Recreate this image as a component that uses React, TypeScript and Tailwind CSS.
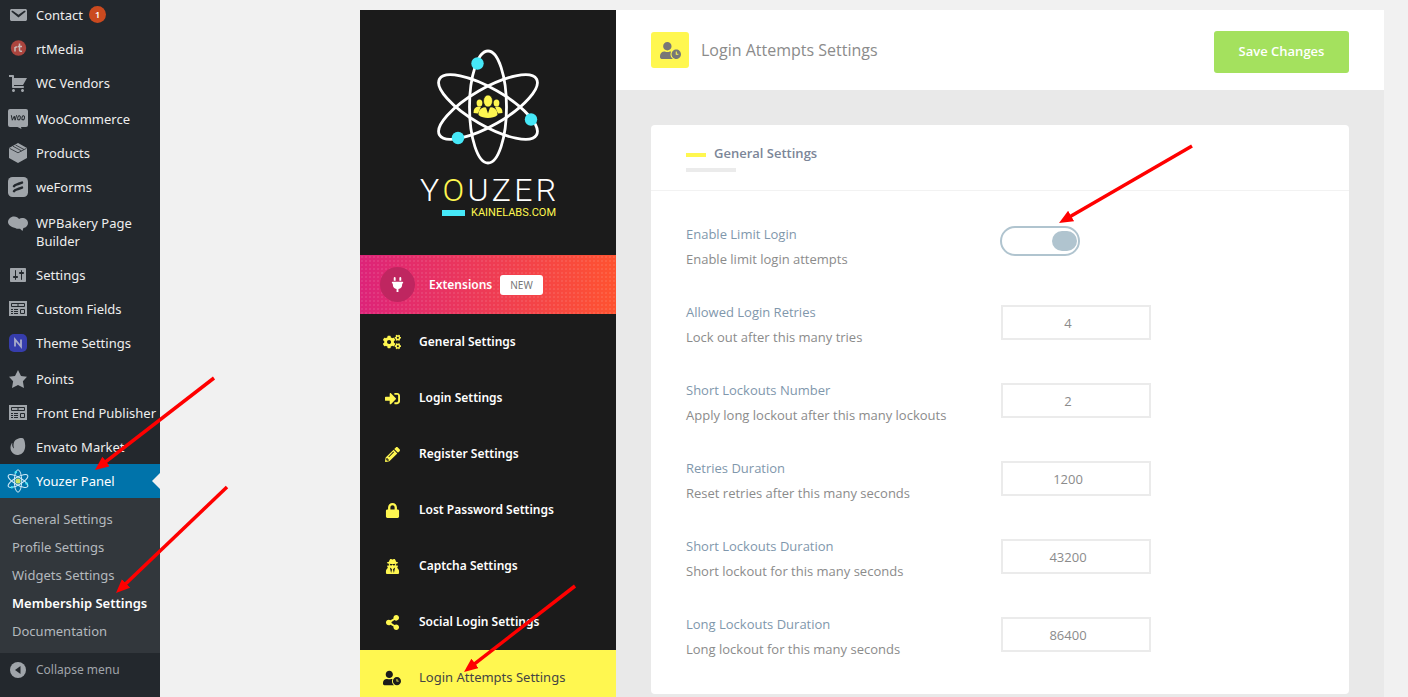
import type { ReactNode } from 'react';
import {
  FaCogs,
  FaLock,
  FaPencilAlt,
  FaPlug,
  FaShareAlt,
  FaSignInAlt,
  FaUserClock,
  FaUserSecret,
} from 'react-icons/fa';
import clsx from 'clsx';

const AtomRings = () => (
  <g fill="none">
    <ellipse cx="60" cy="60" rx="18.5" ry="56" />
    <ellipse cx="60" cy="60" rx="18.5" ry="56" transform="rotate(60 60 60)" />
    <ellipse cx="60" cy="60" rx="18.5" ry="56" transform="rotate(-60 60 60)" />
  </g>
);

const Svg = ({ children }: { children: ReactNode }) => (
  <svg viewBox="0 0 20 20" fill="#a0a5aa" className="size-5">
    {children}
  </svg>
);

const ListIcon = () => (
  <Svg>
    <path d="M1 2h18v15H1z" />
    <path
      d="M3.500 4.500h13v3h-13zM10 4.500v3M12.500 10.500h4v4h-4z"
      fill="none"
      stroke="#23282d"
    />
    <path
      d="M3 10h2v1H3zM6 10h4v1H6zM3 12h2v1H3zM6 12h4v1H6zM3 14h2v1H3zM6 14h4v1H6z"
      fill="#23282d"
    />
  </Svg>
);

type AdminItem = {
  label: string;
  icon: ReactNode;
  count?: number;
  tall?: boolean;
  active?: boolean;
};

const adminItems: AdminItem[] = [
  {
    label: 'Contact',
    count: 1,
    icon: (
      <Svg>
        <path d="M3.87 4h13.25C18.37 4 19 4.59 19 5.79v8.42c0 1.19-.63 1.79-1.88 1.79H3.87c-1.25 0-1.88-.6-1.88-1.79V5.79c0-1.2.63-1.79 1.88-1.79zm6.62 8.6 6.74-5.53c.24-.2.43-.66.13-1.07-.29-.41-.82-.42-1.17-.17l-5.7 3.86L4.8 5.83c-.35-.25-.88-.24-1.17.17-.3.41-.11.87.13 1.07z" />
      </Svg>
    ),
  },
  {
    label: 'rtMedia',
    icon: (
      <Svg>
        <circle cx="10.5" cy="9" r="7.7" fill="#ab453e" />
        <path
          d="M7 12.5V8M7 9.5c0-1.200 1-1.800 2.500-1.500M11.500 4.500v6.500c0 1 .8 1.500 2.500 1.200M10 7.500h4"
          fill="none"
          stroke="#c9bdbb"
          strokeWidth="1.500"
        />
      </Svg>
    ),
  },
  {
    label: 'WC Vendors',
    tall: true,
    icon: (
      <Svg>
        <path d="M6 13h9c.55 0 1 .45 1 1s-.45 1-1 1H5c-.55 0-1-.45-1-1V4H1V2h4c.55 0 1 .45 1 1v2h13l-4 7H6zm-.5 3c.83 0 1.500.67 1.500 1.500S6.330 19 5.500 19 4 18.330 4 17.500 4.670 16 5.500 16zm9 0c.83 0 1.500.67 1.500 1.500s-.67 1.500-1.500 1.500-1.500-.67-1.500-1.500.67-1.500 1.500-1.500z" />
      </Svg>
    ),
  },
  {
    label: 'WooCommerce',
    icon: (
      <Svg>
        <path d="M2 0h16a2 2 0 0 1 2 2v14a2 2 0 0 1-2 2h-5l.5 2-4-2H2a2 2 0 0 1-2-2V2a2 2 0 0 1 2-2z" />
        <g fill="none" stroke="#23282d" strokeWidth="1">
          <path d="M3.300 6.200l1 5 2-4 .8 4 1.500-5" />
          <ellipse cx="11" cy="8.800" rx="1.300" ry="2.100" transform="rotate(12 11 8.800)" />
          <ellipse cx="15.200" cy="8.800" rx="1.300" ry="2.100" transform="rotate(12 15.200 8.800)" />
        </g>
      </Svg>
    ),
  },
  {
    label: 'Products',
    icon: (
      <Svg>
        <path d="M10 0l9 5v10l-9 5-9-5V5z" />
        <path
          d="M1.500 5.300L10 9.800l8.500-4.500M5 3.200l8.500 4.700M7.500 2l8.500 4.500"
          fill="none"
          stroke="#23282d"
          strokeWidth=".8"
        />
      </Svg>
    ),
  },
  {
    label: 'weForms',
    tall: true,
    icon: (
      <Svg>
        <rect width="20" height="20" rx="4.500" />
        <path
          d="M6 9.200c.5-1.200 2-1.600 4-2.200l4-1.400M6 14.200c.5-1.200 2-1.600 4-2.200l4-1.400"
          fill="none"
          stroke="#23282d"
          strokeWidth="2.500"
          strokeLinecap="round"
        />
      </Svg>
    ),
  },
  {
    label: 'WPBakery Page Builder',
    icon: (
      <Svg>
        <path d="M6 3.500c2.500 0 4 1 5 2.500 1-.8 2-1 3-1 3.500 0 6 2 6 5 0 2.500-1.800 4.700-4.600 5.100L14.500 18l-2.500-2.300c-1.800.2-3.200.2-4.800-.7C2.500 14 0 11.500 0 9c0-3 2.700-5.500 6-5.500z" />
      </Svg>
    ),
  },
  {
    label: 'Settings',
    icon: (
      <Svg>
        <path d="M18 16V4c0-.55-.45-1-1-1H3c-.55 0-1 .45-1 1v12c0 .55.45 1 1 1h14c.55 0 1-.45 1-1zM8 11h1c.55 0 1 .45 1 1s-.45 1-1 1H8v1.500c0 .28-.22.5-.5.5s-.5-.22-.5-.5V13H6c-.55 0-1-.45-1-1s.45-1 1-1h1V5.500c0-.28.22-.5.5-.5s.5.22.5.5V11zm5-2h-1c-.55 0-1-.45-1-1s.45-1 1-1h1V5.500c0-.28.22-.5.5-.5s.5.22.5.5V7h1c.55 0 1 .45 1 1s-.45 1-1 1h-1v5.500c0 .28-.22.5-.5.5s-.5-.22-.5-.5V9z" />
      </Svg>
    ),
  },
  { label: 'Custom Fields', icon: <ListIcon /> },
  {
    label: 'Theme Settings',
    tall: true,
    icon: (
      <Svg>
        <rect x="1" y="1" width="18" height="18" rx="5" fill="#363dac" />
        <path d="M7 13.500v-7l6 7v-7" fill="none" stroke="#a9abc9" strokeWidth="1.800" />
      </Svg>
    ),
  },
  {
    label: 'Points',
    icon: (
      <Svg>
        <path d="M10 1l3 6 6 .75-4.120 4.620L16 19l-6-3-6 3 1.130-6.630L1 7.750 7 7z" />
      </Svg>
    ),
  },
  { label: 'Front End Publisher', icon: <ListIcon /> },
  {
    label: 'Envato Market',
    icon: (
      <Svg>
        <path d="M14.800 1.200c-3.200-.6-7.800 1-8.900 4.400C5.200 8 5.500 9.600 6 11c.1.300-.2.400-.4.200C4.300 10 4 8 4.300 6.300c0-.3-.3-.3-.5-.1-1.700 2.400-1.700 5.500-.6 7.900 1.600 3 4.500 4.200 7 3.900 4.600-.6 7.100-4.500 7-9.500-.1-3-.8-6.900-2.400-7.300z" />
      </Svg>
    ),
  },
  {
    label: 'Youzer Panel',
    active: true,
    icon: (
      <svg viewBox="0 0 120 120" className="size-6">
        <g stroke="#cfe9f7" strokeWidth="5">
          <AtomRings />
        </g>
        <circle cx="60" cy="60" r="13" fill="#c9e265" />
        <g fill="#46e8f8">
          <circle cx="49" cy="16" r="6" />
          <circle cx="103" cy="72" r="6" />
          <circle cx="29" cy="91" r="6" />
        </g>
      </svg>
    ),
  },
];

const subItems = [
  'General Settings',
  'Profile Settings',
  'Widgets Settings',
  'Membership Settings',
  'Documentation',
];

const panelItems = [
  { label: 'General Settings', icon: <FaCogs className="size-[18px]" /> },
  { label: 'Login Settings', icon: <FaSignInAlt /> },
  { label: 'Register Settings', icon: <FaPencilAlt /> },
  { label: 'Lost Password Settings', icon: <FaLock /> },
  { label: 'Captcha Settings', icon: <FaUserSecret /> },
  { label: 'Social Login Settings', icon: <FaShareAlt /> },
  { label: 'Login Attempts Settings', icon: <FaUserClock className="size-[18px]" />, active: true },
];

const fields = [
  { id: 'retries', label: 'Allowed Login Retries', desc: 'Lock out after this many tries', value: 4 },
  {
    id: 'short-number',
    label: 'Short Lockouts Number',
    desc: 'Apply long lockout after this many lockouts',
    value: 2,
  },
  {
    id: 'retries-duration',
    label: 'Retries Duration',
    desc: 'Reset retries after this many seconds',
    value: 1200,
  },
  {
    id: 'short-duration',
    label: 'Short Lockouts Duration',
    desc: 'Short lockout for this many seconds',
    value: 43200,
  },
  {
    id: 'long-duration',
    label: 'Long Lockouts Duration',
    desc: 'Long lockout for this many seconds',
    value: 86400,
  },
];

const AdminMenu = () => (
  <nav className="w-40 shrink-0 bg-[#23282d] font-['Noto_Sans','Open_Sans',sans-serif] text-[13px] leading-[18px] text-[#eee]">
    <ul className="-mt-0.5">
      {adminItems.map((item) => (
        <li key={item.label} className={clsx(item.tall && 'pb-0.5')}>
          <a
            href="#"
            className={clsx('relative flex py-2', item.active && 'bg-[#0073aa] text-white')}
          >
            <span className="-my-px flex h-5 w-9 shrink-0 items-center justify-center">
              {item.icon}
            </span>
            <span className={clsx(item.label.length < 20 && 'whitespace-nowrap')}>
              {item.label}
            </span>
            {item.count && (
              <span className="ml-1.5 flex size-[17px] items-center justify-center rounded-full bg-[#ca4a1f] text-[9px] font-semibold text-white">
                {item.count}
              </span>
            )}
            {item.active && (
              <span className="absolute top-[9px] right-0 border-y-8 border-r-8 border-y-transparent border-r-[#f1f1f1]" />
            )}
          </a>
        </li>
      ))}
    </ul>
    <ul className="bg-[#32373c] pt-[7px] pb-2">
      {subItems.map((label) => (
        <li key={label}>
          <a
            href="#"
            className={clsx(
              'block px-3 py-[5px] whitespace-nowrap',
              label === 'Membership Settings' ? 'font-semibold text-white' : 'text-[#b4b9be]',
            )}
          >
            {label}
          </a>
        </li>
      ))}
    </ul>
    <button className="flex w-full items-center py-2 text-xs leading-[18px] text-[#a0a5aa]">
      <span className="flex w-9 justify-center">
        <svg viewBox="0 0 16 16" className="size-4">
          <circle cx="8" cy="8" r="8" fill="#a0a5aa" />
          <path d="M10.500 4v8L5 8z" fill="#23282d" />
        </svg>
      </span>
      Collapse menu
    </button>
  </nav>
);

const Logo = () => (
  <div className="flex h-[245px] flex-col items-center pt-[37px]">
    <svg viewBox="0 0 120 120" className="size-[120px]">
      <g stroke="#fff" strokeWidth="2.800">
        <AtomRings />
      </g>
      <g fill="#46e8f8">
        <circle cx="49.500" cy="16.500" r="6.200" />
        <circle cx="103" cy="72.500" r="6.200" />
        <circle cx="30" cy="91" r="6.200" />
      </g>
      <g fill="#fff750">
        <ellipse cx="51.500" cy="56" rx="2.900" ry="3.500" />
        <ellipse cx="68.500" cy="56" rx="2.900" ry="3.500" />
        <path d="M45.500 66c0-4 1.500-6 4.500-6.500l3 .2-3 6.800zM74.500 66c0-4-1.500-6-4.500-6.500l-3 .2 3 6.800z" />
        <path d="M50.500 68c0-4.500 2-7 5.500-7.800l2 .2 2 6 2-6 2-.2c3.500.8 5.500 3.300 5.500 7.800-2.500 2.200-6 3-9.500 3s-7-.8-9.500-3z" />
        <ellipse cx="60" cy="54" rx="4.500" ry="6" stroke="#1b1b1b" strokeWidth=".6" />
      </g>
    </svg>
    <div className="mt-1.5 w-[136px] font-[Roboto,sans-serif]">
      <div className="flex justify-between text-[32px] leading-[34px] font-light text-white">
        <span>Y</span>
        <span className="text-[#fff750]">O</span>
        <span>U</span>
        <span>Z</span>
        <span>E</span>
        <span>R</span>
      </div>
      <div className="flex items-center justify-end gap-1.5 text-[11px] leading-3 text-[#fff750]">
        <span className="h-1.5 w-[23px] bg-[#46e8f8]" />
        KAINELABS.COM
      </div>
    </div>
  </div>
);

const PanelMenu = () => (
  <aside className="w-64 shrink-0 bg-[#1b1b1b] font-['Noto_Sans','Open_Sans',sans-serif] text-xs text-white">
    <Logo />
    <a
      href="#"
      className="flex h-[59px] items-center bg-[radial-gradient(circle,rgba(255,255,255,0.12)_0.6px,transparent_1px),linear-gradient(to_right,#dd2379,#ff5330)] bg-[size:4px_4px,100%_100%] pl-5 font-semibold"
    >
      <span className="flex size-[35px] items-center justify-center rounded-full bg-[#bf2660]">
        <FaPlug className="size-[15px]" />
      </span>
      <span className="ml-3.5">Extensions</span>
      <span className="ml-2 rounded-[3px] bg-white px-[10px] text-[10px] leading-5 font-normal text-[#777]">
        NEW
      </span>
    </a>
    <ul>
      {panelItems.map((item) => (
        <li key={item.label}>
          <a
            href="#"
            className={clsx(
              'flex h-14 items-center',
              item.active ? 'bg-[#fff750] text-[13px] text-[#444]' : 'font-semibold',
            )}
          >
            <span
              className={clsx(
                'mr-3 ml-[17px] flex w-[30px] justify-center text-[15px]',
                item.active ? 'text-[#1b1b1b]' : 'text-[#fff750]',
              )}
            >
              {item.icon}
            </span>
            {item.label}
          </a>
        </li>
      ))}
    </ul>
  </aside>
);

const Field = ({
  id,
  label,
  desc,
  children,
}: {
  id: string;
  label: string;
  desc: string;
  children: ReactNode;
}) => (
  <div className="flex items-start">
    <div className="w-1/2 text-[13px] leading-[25px]">
      <label htmlFor={id} className="block font-medium text-[#7f97ac]">
        {label}
      </label>
      <p className="text-[#8b8b8b]">{desc}</p>
    </div>
    {children}
  </div>
);

const arrows = [
  { from: [214, 378], to: [95, 470] },
  { from: [227, 487], to: [116, 593] },
  { from: [575, 586], to: [464, 672] },
  { from: [1192, 146], to: [1059, 223] },
];

const Arrows = () => (
  <svg className="pointer-events-none absolute top-0 left-0 h-full w-full overflow-hidden">
    <defs>
      <marker
        id="head"
        viewBox="0 0 14 12"
        refX="14"
        refY="6"
        markerWidth="14"
        markerHeight="12"
        markerUnits="userSpaceOnUse"
        orient="auto"
      >
        <path d="M0 0L14 6L0 12z" fill="#f00" />
      </marker>
    </defs>
    {arrows.map(({ from, to }) => {
      // stop the stroke inside the head so the tip stays sharp
      const len = Math.hypot(to[0] - from[0], to[1] - from[1]);
      const k = (len - 8) / len;
      return (
        <g key={from[0]} stroke="#f00">
          <line
            x1={from[0]}
            y1={from[1]}
            x2={from[0] + (to[0] - from[0]) * k}
            y2={from[1] + (to[1] - from[1]) * k}
            strokeWidth="3.500"
          />
          <line
            x1={from[0]}
            y1={from[1]}
            x2={to[0]}
            y2={to[1]}
            strokeWidth="0.010"
            markerEnd="url(#head)"
          />
        </g>
      );
    })}
  </svg>
);

const App = () => {
  return (
    <div className="relative flex h-screen overflow-hidden bg-[#f1f1f1] font-['Open_Sans',sans-serif]">
      <AdminMenu />
      <div className="mt-2.5 mr-6 ml-[200px] flex flex-1">
        <PanelMenu />
        <main className="flex-1 bg-[#e9e9e9]">
          <header className="flex h-20 items-center bg-white px-[35px]">
            <span className="flex h-9 w-[38px] items-center justify-center rounded-[3px] bg-[#fff750] text-[#777]">
              <FaUserClock className="size-[21px]" />
            </span>
            <h1 className="ml-3 text-base text-[#8b8b8b]">Login Attempts Settings</h1>
            <button className="mt-1 ml-auto h-[42px] w-[135px] rounded-[3px] bg-[#a4e15e] text-[13px] font-semibold text-white">
              Save Changes
            </button>
          </header>
          <section className="m-[35px] rounded-[4px] bg-white">
            <div className="flex h-[66px] flex-col border-b border-[#f2f2f2] px-[35px] pt-[18px]">
              <h2 className="flex items-center text-[13px] leading-5 font-semibold text-[#7c8698]">
                <span className="mt-1 mr-2 h-1 w-5 bg-[#fff750]" />
                General Settings
              </h2>
              <span className="mt-[5px] h-1 w-[50px] bg-[#ebebeb]" />
            </div>
            <form className="flex flex-col gap-7 px-[35px] pt-[31px] pb-8">
              <Field id="enable" label="Enable Limit Login" desc="Enable limit login attempts">
                <input
                  id="enable"
                  type="checkbox"
                  defaultChecked
                  className="relative mt-1 h-[30px] w-20 appearance-none rounded-full border-2 border-[#b0c4cf] before:absolute before:top-[3px] before:left-[3px] before:h-5 before:w-[25px] before:rounded-full before:bg-[#b0c4cf] checked:before:right-px checked:before:left-auto"
                />
              </Field>
              {fields.map((f) => (
                <Field key={f.id} id={f.id} label={f.label} desc={f.desc}>
                  <input
                    id={f.id}
                    type="text"
                    defaultValue={f.value}
                    className="mt-[5px] ml-px h-[35px] w-[150px] border-2 border-[#ebebeb] pr-4 text-center text-[13px] text-[#8b8b8b]"
                  />
                </Field>
              ))}
            </form>
          </section>
        </main>
      </div>
      <Arrows />
    </div>
  );
};

export default App;
